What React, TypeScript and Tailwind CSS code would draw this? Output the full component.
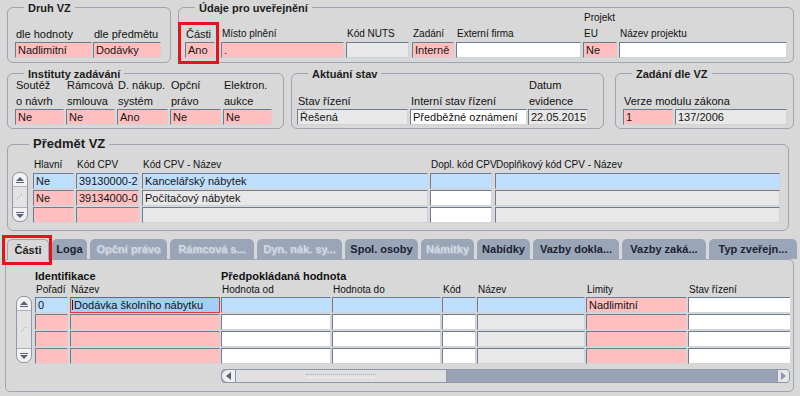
import React from "react";

const PINK = "bg-[#ffbfbf]";
const BLUE = "bg-[#bfdfff]";
const GRAY = "bg-[#e8e8e8]";
const WHITE = "bg-white";

function Field({ w, bg, children, cls = "" }: { w: string; bg: string; children?: React.ReactNode; cls?: string }) {
  return (
    <div
      className={`${w} ${bg} ${cls} h-[16px] shrink-0 border border-[#6f7c90] border-r-[#cfd4db] border-b-[#cfd4db] pl-[2px] text-[11px] leading-[14px] text-[#151515] whitespace-nowrap overflow-hidden`}
    >
      {children}
    </div>
  );
}

function Label({ children, sm, cls = "" }: { children?: React.ReactNode; sm?: boolean; cls?: string }) {
  return (
    <div className={`${sm ? "text-[10px]" : "text-[11px]"} ${cls} w-0 leading-[16px] pl-[1px] whitespace-nowrap text-[#111]`}>
      {children}
    </div>
  );
}

function Head({ children, h13 }: { children?: React.ReactNode; h13?: boolean }) {
  return (
    <div className={`${h13 ? "h-[13px] leading-[13px]" : "h-[15px] leading-[15px]"} w-0 text-[10px] pl-[1px] whitespace-nowrap`}>
      {children}
    </div>
  );
}

function Panel({ title, cls, big, children }: { title: string; cls: string; big?: boolean; children?: React.ReactNode }) {
  return (
    <div className={`relative shrink-0 border border-[#9ca5b1] rounded-[6px] ${cls}`}>
      {big ? (
        <span className="absolute left-[21px] top-[-9px] bg-[#d8d8d8] px-[4px] text-[13px] font-bold leading-[16px] text-[#1c1c1c] whitespace-nowrap">
          {title}
        </span>
      ) : (
        <span className="absolute left-[16px] top-[-7px] bg-[#d8d8d8] px-[4px] text-[11px] font-bold leading-[14px] text-[#1c1c1c] whitespace-nowrap">
          {title}
        </span>
      )}
      {children}
    </div>
  );
}

function VScroll({ h }: { h: string }) {
  return (
    <div className={`${h} w-[16px] shrink-0 flex flex-col rounded-[7px] border border-[#8d98a9] bg-[#e2e2e2] overflow-hidden`}>
      <div className="h-[14px] shrink-0 flex flex-col items-center justify-center gap-[1px] bg-[#f2f2f2] border-b border-[#aab2bf] rounded-t-[7px]">
        <svg width="8" height="4" viewBox="0 0 8 4">
          <path d="M0 4L4 0L8 4Z" fill="#56637a" />
        </svg>
        <div className="w-[8px] h-[1px] bg-[#56637a]" />
      </div>
      <div className="flex-1 flex items-center justify-center">
        <svg width="6" height="6" viewBox="0 0 6 6">
          <rect x="4" y="0" width="1" height="1" fill="#9aa3b0" />
          <rect x="2" y="2" width="1" height="1" fill="#9aa3b0" />
          <rect x="0" y="4" width="1" height="1" fill="#9aa3b0" />
          <rect x="4" y="4" width="1" height="1" fill="#ffffff" />
        </svg>
      </div>
      <div className="h-[14px] shrink-0 flex flex-col items-center justify-center gap-[1px] bg-[#f2f2f2] border-t border-[#aab2bf] rounded-b-[7px]">
        <div className="w-[8px] h-[1px] bg-[#56637a]" />
        <svg width="8" height="4" viewBox="0 0 8 4">
          <path d="M0 0L4 4L8 0Z" fill="#56637a" />
        </svg>
      </div>
    </div>
  );
}

function HScroll() {
  return (
    <div className="mt-[5px] flex h-[14px] w-[569px] border border-[#8d98a9] rounded-[4px] bg-[#98a4b6] overflow-hidden">
      <div className="w-[14px] h-full shrink-0 flex items-center justify-center bg-[#efefef] border-r border-[#8d98a9] rounded-l-[6px]">
        <svg width="5" height="8" viewBox="0 0 5 8">
          <path d="M5 0L0 4L5 8Z" fill="#56637a" />
        </svg>
      </div>
      <div className="w-[211px] h-full shrink-0 flex flex-col items-center justify-center gap-[2px] bg-[#e0e0e0] border-r border-[#8d98a9]">
        <div className="w-[70px] border-t border-dotted border-[#a9b1bd]" />
        <div className="w-[66px] border-t border-dotted border-[#ffffff]" />
      </div>
      <div className="flex-1" />
      <div className="w-[12px] h-full shrink-0 flex items-center justify-center bg-[#e6e6e6] border-l border-[#8d98a9]">
        <svg width="5" height="8" viewBox="0 0 5 8">
          <path d="M0 0L5 4L0 8Z" fill="#8d98a9" />
        </svg>
      </div>
    </div>
  );
}

function Tab({ label, w, state }: { label: string; w: string; state: "active" | "on" | "off" }) {
  const look =
    state === "active"
      ? "bg-[#d8d8d8] border border-b-0 border-[#9ca5b1] text-[#222] h-[21px] mb-[-1px] relative z-10"
      : state === "on"
      ? "bg-[#9aa6b8] text-[#1b2231] h-[20px]"
      : "bg-[#9aa6b8] text-[#d3dae4] h-[20px] [text-shadow:1px_1px_0_#b3bdcb]";
  return (
    <div className={`${w} ${look} shrink-0 rounded-t-[5px] flex items-center justify-center font-bold text-[11px] leading-[14px] whitespace-nowrap`}>
      {label}
    </div>
  );
}

export default function App() {
  return (
    <div className="w-[800px] h-[396px] overflow-hidden bg-[#d8d8d8] font-['Liberation_Sans',Arial,sans-serif] text-[11px] text-[#111]">
      {/* Row 1 */}
      <div className="flex pt-[7px] pl-[7px]">
        <Panel title="Druh VZ" cls="w-[164px] h-[56px] flex items-end pb-[4px] pl-[7px]">
          <div className="flex flex-col">
            <Label>dle hodnoty</Label>
            <Field w="w-[77px]" bg={PINK}>Nadlimitní</Field>
          </div>
          <div className="flex flex-col ml-[1px]">
            <Label>dle předmětu</Label>
            <Field w="w-[68px]" bg={PINK}>Dodávky</Field>
          </div>
        </Panel>
        <Panel title="Údaje pro uveřejnění" cls="ml-[7px] w-[616px] h-[56px] flex items-end pb-[4px] pl-[6px]">
          <div className="relative flex flex-col">
            <Label>Části</Label>
            <Field w="w-[30px]" bg={PINK}>Ano</Field>
            <div className="absolute left-[-7px] top-[-4px] w-[41px] h-[42px] border-[3px] border-[#e4141c] z-10" />
          </div>
          <div className="flex flex-col ml-[6px]">
            <Label sm>Místo plnění</Label>
            <Field w="w-[123px]" bg={PINK}>.</Field>
          </div>
          <div className="flex flex-col ml-[2px]">
            <Label sm>Kód NUTS</Label>
            <Field w="w-[63px]" bg={GRAY} />
          </div>
          <div className="flex flex-col ml-[3px]">
            <Label sm>Zadání</Label>
            <Field w="w-[42px]" bg={PINK}>Interně</Field>
          </div>
          <div className="flex flex-col ml-[2px]">
            <Label sm>Externí firma</Label>
            <Field w="w-[125px]" bg={WHITE} />
          </div>
          <div className="flex flex-col ml-[2px]">
            <Label sm>
              Projekt
              <br />
              EU
            </Label>
            <Field w="w-[34px]" bg={PINK}>Ne</Field>
          </div>
          <div className="flex flex-col ml-[2px]">
            <Label sm>Název projektu</Label>
            <Field w="w-[168px]" bg={WHITE} />
          </div>
        </Panel>
      </div>

      {/* Row 2 */}
      <div className="flex pl-[7px] mt-[10px]">
        <Panel title="Instituty zadávání" cls="w-[277px] h-[56px] flex items-end pb-[3px] pl-[7px] gap-[2px]">
          <div className="flex flex-col">
            <Label>
              Soutěž
              <br />o návrh
            </Label>
            <Field w="w-[49px]" bg={PINK}>Ne</Field>
          </div>
          <div className="flex flex-col">
            <Label>
              Rámcová
              <br />
              smlouva
            </Label>
            <Field w="w-[49px]" bg={PINK}>Ne</Field>
          </div>
          <div className="flex flex-col">
            <Label>
              D. nákup.
              <br />
              systém
            </Label>
            <Field w="w-[51px]" bg={PINK}>Ano</Field>
          </div>
          <div className="flex flex-col">
            <Label>
              Opční
              <br />
              právo
            </Label>
            <Field w="w-[51px]" bg={PINK}>Ne</Field>
          </div>
          <div className="flex flex-col">
            <Label>
              Elektron.
              <br />
              aukce
            </Label>
            <Field w="w-[49px]" bg={PINK}>Ne</Field>
          </div>
        </Panel>
        <Panel title="Aktuání stav" cls="ml-[7px] w-[313px] h-[56px] flex items-end pb-[3px] pl-[5px]">
          <div className="flex flex-col">
            <Label>Stav řízení</Label>
            <Field w="w-[111px]" bg={GRAY}>Řešená</Field>
          </div>
          <div className="flex flex-col ml-[2px]">
            <Label>Interní stav řízení</Label>
            <Field w="w-[117px]" bg={WHITE}>Předběžné oznámení</Field>
          </div>
          <div className="flex flex-col ml-[1px]">
            <Label>
              Datum
              <br />
              evidence
            </Label>
            <Field w="w-[60px]" bg={GRAY}>22.05.2015</Field>
          </div>
        </Panel>
        <Panel title="Zadání dle VZ" cls="ml-[11px] w-[179px] h-[56px] flex items-end pb-[3px] pl-[7px]">
          <div className="flex flex-col">
            <Label>Verze modulu zákona</Label>
            <div className="flex gap-[2px]">
              <Field w="w-[50px]" bg={PINK}>1</Field>
              <Field w="w-[112px]" bg={GRAY}>137/2006</Field>
            </div>
          </div>
        </Panel>
      </div>

      {/* Předmět VZ */}
      <div className="pl-[7px] mt-[15px]">
        <Panel title="Předmět VZ" big cls="w-[782px] h-[87px] flex pt-[12px] pl-[4px]">
          <div className="flex flex-col">
            <div className="h-[15px]" />
            <VScroll h="h-[50px]" />
          </div>
          <div className="flex flex-col gap-[1px] ml-[5px]">
            <Head>Hlavní</Head>
            <Field w="w-[41px]" bg={BLUE}>Ne</Field>
            <Field w="w-[41px]" bg={PINK}>Ne</Field>
            <Field w="w-[41px]" bg={PINK} />
          </div>
          <div className="flex flex-col gap-[1px] ml-[2px]">
            <Head>Kód CPV</Head>
            <Field w="w-[63px]" bg={BLUE}>39130000-2</Field>
            <Field w="w-[63px]" bg={PINK}>39134000-0</Field>
            <Field w="w-[63px]" bg={PINK} />
          </div>
          <div className="flex flex-col gap-[1px] ml-[3px]">
            <Head>Kód CPV - Název</Head>
            <Field w="w-[286px]" bg={BLUE}>Kancelářský nábytek</Field>
            <Field w="w-[286px]" bg={GRAY}>Počítačový nábytek</Field>
            <Field w="w-[286px]" bg={GRAY} />
          </div>
          <div className="flex flex-col gap-[1px] ml-[2px]">
            <Head>Dopl. kód CPV</Head>
            <Field w="w-[62px]" bg={BLUE} />
            <Field w="w-[62px]" bg={WHITE} />
            <Field w="w-[62px]" bg={WHITE} />
          </div>
          <div className="flex flex-col gap-[1px] ml-[3px]">
            <Head>Doplňkový kód CPV - Název</Head>
            <Field w="w-[285px]" bg={BLUE} />
            <Field w="w-[285px]" bg={GRAY} />
            <Field w="w-[285px]" bg={GRAY} />
          </div>
        </Panel>
      </div>

      {/* Tabs */}
      <div className="flex items-end gap-[3px] pl-[7px] mt-[8px] h-[20px]">
        <div className="relative shrink-0">
          <Tab label="Části" w="w-[42px]" state="active" />
          <div className="absolute left-[-5px] top-[-4px] w-[50px] h-[30px] border-[3px] border-[#e4141c] z-20" />
        </div>
        <Tab label="Loga" w="w-[35px]" state="on" />
        <Tab label="Opční právo" w="w-[77px]" state="off" />
        <Tab label="Rámcová s..." w="w-[84px]" state="off" />
        <Tab label="Dyn. nák. sy..." w="w-[85px]" state="off" />
        <Tab label="Spol. osoby" w="w-[73px]" state="on" />
        <Tab label="Námitky" w="w-[53px]" state="off" />
        <Tab label="Nabídky" w="w-[53px]" state="on" />
        <Tab label="Vazby dokla..." w="w-[86px]" state="on" />
        <Tab label="Vazby zaká..." w="w-[84px]" state="on" />
        <Tab label="Typ zveřejn..." w="w-[88px]" state="on" />
      </div>

      {/* Tab content */}
      <div className="ml-[5px] w-[789px] h-[133px] border border-[#9ca5b1] rounded-[5px] rounded-tl-none flex pt-[10px]">
        <div className="flex flex-col ml-[10px]">
          <div className="h-[26px]" />
          <VScroll h="h-[67px]" />
        </div>
        <div className="flex flex-col ml-[3px]">
          <div className="h-[13px] w-0 leading-[13px] font-bold text-[11px] whitespace-nowrap">Identifikace</div>
          <div className="flex">
            <div className="flex flex-col gap-[1px]">
              <Head h13>Pořadí</Head>
              <Field w="w-[33px]" bg={BLUE}>0</Field>
              <Field w="w-[33px]" bg={PINK} />
              <Field w="w-[33px]" bg={PINK} />
              <Field w="w-[33px]" bg={PINK} />
            </div>
            <div className="flex flex-col gap-[1px] ml-[2px]">
              <Head h13>Název</Head>
              <div className="w-[150px] h-[16px] border border-[#e8333a] bg-[#a6cef5] flex items-center pl-[1px] text-[11px] leading-[14px] whitespace-nowrap overflow-hidden">
                <span className="w-[1px] h-[10px] bg-[#222] mr-[1px] shrink-0" />
                Dodávka školního nábytku
              </div>
              <Field w="w-[150px]" bg={PINK} />
              <Field w="w-[150px]" bg={PINK} />
              <Field w="w-[150px]" bg={PINK} />
            </div>
          </div>
        </div>
        <div className="flex flex-col ml-[1px] w-[569px] overflow-hidden">
          <div className="h-[13px] leading-[13px] font-bold text-[11px] whitespace-nowrap">Předpokládaná hodnota</div>
          <div className="flex">
            <div className="flex flex-col gap-[1px]">
              <Head h13>Hodnota od</Head>
              <Field w="w-[110px]" bg={BLUE} />
              <Field w="w-[110px]" bg={WHITE} />
              <Field w="w-[110px]" bg={WHITE} />
              <Field w="w-[110px]" bg={WHITE} />
            </div>
            <div className="flex flex-col gap-[1px] ml-[1px]">
              <Head h13>Hodnota do</Head>
              <Field w="w-[109px]" bg={BLUE} />
              <Field w="w-[109px]" bg={WHITE} />
              <Field w="w-[109px]" bg={WHITE} />
              <Field w="w-[109px]" bg={WHITE} />
            </div>
            <div className="flex flex-col gap-[1px] ml-[1px]">
              <Head h13>Kód</Head>
              <Field w="w-[34px]" bg={BLUE} />
              <Field w="w-[34px]" bg={WHITE} />
              <Field w="w-[34px]" bg={WHITE} />
              <Field w="w-[34px]" bg={WHITE} />
            </div>
            <div className="flex flex-col gap-[1px] ml-[1px]">
              <Head h13>Název</Head>
              <Field w="w-[108px]" bg={BLUE} />
              <Field w="w-[108px]" bg={GRAY} />
              <Field w="w-[108px]" bg={GRAY} />
              <Field w="w-[108px]" bg={GRAY} />
            </div>
            <div className="flex flex-col gap-[1px] ml-[1px]">
              <Head h13>Limity</Head>
              <Field w="w-[101px]" bg={PINK}>Nadlimitní</Field>
              <Field w="w-[101px]" bg={PINK} />
              <Field w="w-[101px]" bg={PINK} />
              <Field w="w-[101px]" bg={PINK} />
            </div>
            <div className="flex flex-col gap-[1px] ml-[1px]">
              <Head h13>Stav řízení</Head>
              <Field w="w-[110px]" bg={WHITE} />
              <Field w="w-[110px]" bg={WHITE} />
              <Field w="w-[110px]" bg={WHITE} />
              <Field w="w-[110px]" bg={WHITE} />
            </div>
          </div>
          <HScroll />
        </div>
      </div>
    </div>
  );
}
